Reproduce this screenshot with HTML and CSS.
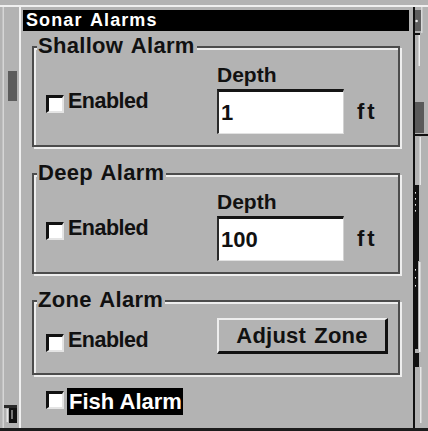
FILE: index.html
```html
<!DOCTYPE html>
<html>
<head>
<meta charset="utf-8">
<title>Sonar Alarms</title>
<link rel="stylesheet" href="styles.css">
</head>
<body>
<div class="screen">
  <div class="top-gap"></div>
  <div class="top-line"></div>
  <div class="main">
    <div class="left-strip">
      <svg width="19" height="421" viewBox="0 0 19 421">
        <rect x="2.5" y="0" width="1.5" height="421" fill="#d6d6d6"/>
        <rect x="8" y="64" width="9" height="30" fill="#5c5c5c"/>
        <rect x="4" y="398" width="13" height="3" fill="#2a2a2a"/>
        <rect x="9" y="401" width="8" height="15" fill="#111"/>
        <rect x="6.5" y="402" width="1.5" height="13" fill="#e6e6e6"/>
        <rect x="11" y="403" width="2" height="9" fill="#777"/>
      </svg>
    </div>
    <div class="window">
      <div class="title">Sonar Alarms</div>

      <div class="group">
        <div class="legend">Shallow Alarm</div>
        <div class="row">
          <div class="check-col">
            <span class="check"></span><span class="check-label">Enabled</span>
          </div>
          <div class="field">
            <div class="label">Depth</div>
            <div class="input-row">
              <div class="input">1</div>
              <span class="unit">ft</span>
            </div>
          </div>
        </div>
      </div>

      <div class="group group-next">
        <div class="legend">Deep Alarm</div>
        <div class="row">
          <div class="check-col">
            <span class="check"></span><span class="check-label">Enabled</span>
          </div>
          <div class="field">
            <div class="label">Depth</div>
            <div class="input-row">
              <div class="input">100</div>
              <span class="unit">ft</span>
            </div>
          </div>
        </div>
      </div>

      <div class="group group-next">
        <div class="legend">Zone Alarm</div>
        <div class="row row-zone">
          <div class="check-col check-col-zone">
            <span class="check"></span><span class="check-label">Enabled</span>
          </div>
          <div class="button">Adjust Zone</div>
        </div>
      </div>

      <div class="fish-row">
        <span class="check"></span><span class="fish-label">Fish Alarm</span>
      </div>
    </div>
    <div class="right-strip">
      <svg width="15" height="421" viewBox="0 0 15 421">
        <rect x="2" y="3" width="7" height="21" fill="#5e5e5e"/>
        <circle cx="3.6" cy="14" r="1.3" fill="#eeeeee"/>
        <rect x="0" y="26" width="7" height="2" fill="#111"/>
        <rect x="5.5" y="28" width="1.5" height="31" fill="#eeeeee"/>
        <rect x="8" y="0" width="1.5" height="26" fill="#d8d8d8"/>
        <rect x="2" y="95" width="9" height="31" fill="#5a5a5a"/>
        <rect x="0" y="127" width="15" height="2" fill="#111"/>
        <rect x="6.5" y="130" width="1.5" height="48" fill="#e6e6e6"/>
        <rect x="0" y="178" width="6" height="76" fill="#111"/>
        <rect x="1.6" y="185" width="1.4" height="1.6" fill="#eee"/>
        <rect x="1.6" y="191" width="1.4" height="1.6" fill="#eee"/>
        <rect x="1.6" y="197" width="1.4" height="1.6" fill="#eee"/>
        <rect x="1.6" y="203" width="1.4" height="1.6" fill="#eee"/>
        <rect x="0" y="254" width="5" height="88" fill="#111"/>
        <rect x="6" y="255" width="1.5" height="90" fill="#eeeeee"/>
        <rect x="1.6" y="262" width="1.4" height="1.6" fill="#eee"/>
        <rect x="1.6" y="270" width="1.4" height="1.6" fill="#eee"/>
        <rect x="1.6" y="278" width="1.4" height="1.6" fill="#eee"/>
        <rect x="0" y="346" width="6" height="14" fill="#111"/>
        <rect x="7" y="360" width="1.5" height="56" fill="#e6e6e6"/>
        <rect x="0" y="0" width="2" height="421" fill="#111"/>
      </svg>
    </div>
  </div>
  <div class="bottom-line"></div>
</div>
</body>
</html>
```

FILE: styles.css
```css
html, body {
  margin: 0;
  padding: 0;
}

body {
  width: 428px;
  height: 431px;
  overflow: hidden;
  background: #b3b3b3;
  font-family: "Liberation Sans", Arial, sans-serif;
  font-weight: bold;
  color: #111;
}

.screen {
  display: flex;
  flex-direction: column;
  height: 431px;
}

.top-gap {
  height: 5px;
}

.top-line {
  height: 2px;
  background: #f0f0f0;
}

.main {
  flex: 1;
  display: flex;
  min-height: 0;
}

.bottom-line {
  height: 3px;
  background: #1c1c1c;
}

.left-strip {
  width: 19px;
  flex: none;
}

.left-strip svg,
.right-strip svg {
  display: block;
}

.right-strip {
  width: 15px;
  flex: none;
}

.window {
  width: 394px;
  flex: none;
  box-sizing: border-box;
  border-left: 2px solid #f0f0f0;
  display: flex;
  flex-direction: column;
}

.title {
  margin: 3px 4px 0 2px;
  height: 21px;
  background: #000;
  color: #fff;
  font-size: 18px;
  line-height: 21px;
  padding-left: 3px;
  letter-spacing: 1.1px;
  word-spacing: 2px;
  white-space: nowrap;
}

.group {
  margin: 15px 13px 0 11px;
  border: 2px solid #4c4c4c;
  box-shadow: inset 2px 2px 0 #eeeeee, 2px 2px 0 #eeeeee;
}

.group-next {
  margin-top: 26px;
}

.legend {
  width: fit-content;
  margin: -13px 0 -9px 3px;
  padding: 0 2px 0 1px;
  background: #b3b3b3;
  font-size: 22px;
  line-height: 22px;
  height: 22px;
  letter-spacing: 0.3px;
  word-spacing: 2px;
  white-space: nowrap;
}

.row {
  display: flex;
  align-items: flex-start;
  padding: 16px 0 11px 12px;
}

.row-zone {
  padding-bottom: 19px;
}

.check-col {
  width: 171px;
  flex: none;
  margin-top: 25px;
  display: flex;
  align-items: flex-start;
}

.check-col-zone {
  margin-top: 10px;
}

.check {
  display: block;
  flex: none;
  width: 18px;
  height: 18px;
  box-sizing: border-box;
  border-top: 3px solid #111;
  border-left: 3px solid #111;
  border-right: 2px solid #e4e4e4;
  border-bottom: 2px solid #e4e4e4;
  background: #fff;
  margin-top: 6px;
  margin-right: 4px;
}

.check-label {
  font-size: 21.5px;
  line-height: 24px;
  letter-spacing: -0.5px;
}

.field {
  display: flex;
  flex-direction: column;
}

.label {
  font-size: 21px;
  line-height: 22px;
  height: 22px;
  margin-bottom: 3px;
  letter-spacing: 0;
}

.input-row {
  display: flex;
  align-items: center;
}

.input {
  width: 127px;
  height: 45px;
  box-sizing: border-box;
  border-top: 3px solid #151515;
  border-left: 2px solid #2a2a2a;
  border-right: 1px solid #d2d2d2;
  border-bottom: 1px solid #e2e2e2;
  background: #fff;
  padding-left: 2px;
  font-size: 22px;
  display: flex;
  align-items: center;
}

.unit {
  margin-left: 13px;
  font-size: 22px;
  letter-spacing: 3px;
}

.button {
  width: 171px;
  height: 36px;
  box-sizing: border-box;
  border-top: 2px solid #eeeeee;
  border-left: 2px solid #eeeeee;
  border-right: 3px solid #111;
  border-bottom: 3px solid #111;
  display: flex;
  align-items: center;
  justify-content: center;
  font-size: 22px;
  letter-spacing: 0.2px;
  word-spacing: 2px;
  white-space: nowrap;
}

.fish-row {
  display: flex;
  align-items: flex-start;
  margin-top: 13px;
  padding-left: 25px;
}

.fish-row .check {
  margin-top: 3px;
  margin-right: 3px;
}

.fish-label {
  background: #000;
  color: #fff;
  height: 27px;
  line-height: 27px;
  padding: 0 1px 0 2px;
  font-size: 22px;
  letter-spacing: 0;
  word-spacing: 0;
  white-space: nowrap;
}
```
